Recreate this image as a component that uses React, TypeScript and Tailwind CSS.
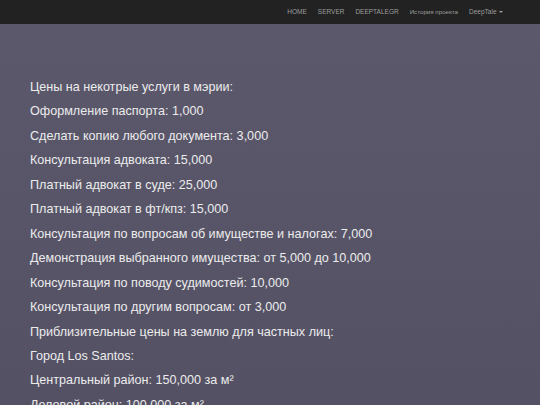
const navItems = ["HOME", "SERVER", "DEEPTALEGR"];

const lines = [
  "Цены на некотрые услуги в мэрии:",
  "Оформление паспорта: 1,000",
  "Сделать копию любого документа: 3,000",
  "Консультация адвоката: 15,000",
  "Платный адвокат в суде: 25,000",
  "Платный адвокат в фт/кпз: 15,000",
  "Консультация по вопросам об имуществе и налогах: 7,000",
  "Демонстрация выбранного имущества: от 5,000 до 10,000",
  "Консультация по поводу судимостей: 10,000",
  "Консультация по другим вопросам: от 3,000",
  "Приблизительные цены на землю для частных лиц:",
  "Город Los Santos:",
  "Центральный район: 150,000 за м²",
  "Деловой район: 100,000 за м²",
];

export default function App() {
  return (
    <div
      className="h-[405px] w-[540px] overflow-hidden bg-gradient-to-b from-[#5c596c] to-[#545165]"
      style={{ fontFamily: '"Liberation Sans", Arial, sans-serif' }}
    >
      <nav className="flex h-6 items-center justify-end bg-[#222222] pr-[32px]">
        {navItems.map((item) => (
          <a key={item} className="px-[5.5px] text-[6.5px] text-[#9d9d9d]">
            {item}
          </a>
        ))}
        <a className="px-[5.5px] text-[6.2px] text-[#9d9d9d]">История проекта</a>
        <a className="flex items-center gap-[2px] px-[5.5px] text-[6.5px] text-[#9d9d9d]">
          DeepTale
          <span className="inline-block border-x-[2px] border-t-[2px] border-x-transparent border-t-[#9d9d9d]" />
        </a>
      </nav>

      <main className="px-[30px] pt-[51px]">
        {lines.map((line) => (
          <p key={line} className="text-[12.6px] leading-[24.46px] text-[#ececec]">
            {line}
          </p>
        ))}
      </main>
    </div>
  );
}
